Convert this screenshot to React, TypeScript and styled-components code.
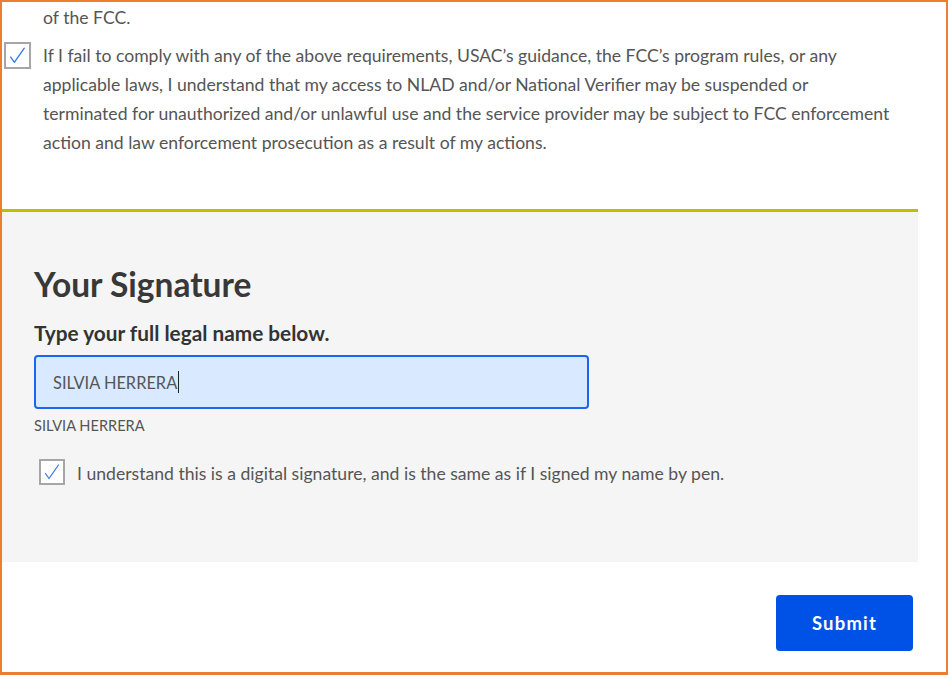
import React from "react";
import styled, { createGlobalStyle } from "styled-components";

const Global = createGlobalStyle`
  html, body { margin: 0; padding: 0; background: #fff; }
  body { font-family: "Lato", "Open Sans", sans-serif; }
  * { box-sizing: border-box; }
`;

const Frame = styled.div`
  width: 948px;
  height: 675px;
  border: 2px solid #ed7d31;
  border-bottom-width: 3px;
  overflow: hidden;
  background: #fff;
`;

const Column = styled.div`
  width: 916px;
  display: flex;
  flex-direction: column;
`;

const Agreement = styled.section`
  padding: 1px 0 52px 0;
  display: flex;
  flex-direction: column;
  gap: 9px;
`;

const Paragraph = styled.p<{ $indent?: number }>`
  margin: 0;
  padding-left: ${(p) => p.$indent ?? 0}px;
  font-size: 17.6px;
  line-height: 29px;
  color: #555;
  white-space: nowrap;
`;

const CheckRow = styled.div<{ $gap: number; $offset: number; $boxTop: number }>`
  display: flex;
  align-items: flex-start;
  gap: ${(p) => p.$gap}px;
  padding-left: ${(p) => p.$offset}px;
  & > :first-child { margin-top: ${(p) => p.$boxTop}px; }
`;

const Box = styled.span<{ $size: number }>`
  flex: none;
  width: ${(p) => p.$size}px;
  height: ${(p) => p.$size}px;
  border: 2px solid #a6a6a6;
  background: #fff;
  display: flex;
  align-items: center;
  justify-content: center;
`;

const SignatureSection = styled.section`
  background: #f5f5f5;
  border-top: 3px solid #bcc000;
  padding: 52px 0 74px 32px;
  display: flex;
  flex-direction: column;
`;

const Heading = styled.h2`
  margin: 0;
  font-size: 33.5px;
  line-height: 40px;
  font-weight: 700;
  color: #383838;
`;

const Label = styled.label`
  margin-top: 17px;
  font-size: 20.8px;
  line-height: 24px;
  font-weight: 700;
  color: #333;
`;

const NameField = styled.div`
  margin-top: 10px;
  width: 555px;
  height: 54px;
  border: 2px solid #1a66ee;
  border-radius: 4px;
  background: #d9e9ff;
  display: flex;
  align-items: center;
  padding-left: 17px;
  font-size: 16.4px;
  color: #555;
`;

const Caret = styled.span`
  display: inline-block;
  width: 1px;
  height: 22px;
  background: #222;
  margin-left: 1px;
`;

const Echo = styled.div`
  margin-top: 8px;
  font-size: 14.6px;
  line-height: 18px;
  color: #555;
`;

const SignRow = styled.div`
  margin-top: 24px;
`;

const Footer = styled.div`
  display: flex;
  justify-content: flex-end;
  padding: 33px 5px 0 0;
`;

const SubmitButton = styled.button`
  width: 137px;
  height: 56px;
  border: none;
  border-radius: 4px;
  background: #0052e6;
  color: #fff;
  font-family: "Lato", sans-serif;
  font-weight: 700;
  font-size: 18.5px;
  letter-spacing: 1.2px;
  cursor: pointer;
`;

const Check = ({ size }: { size: number }) => (
  <svg width={size - 4} height={size - 4} viewBox="0 0 22 22">
    <path d="M4.5 12.5 L8 17.5 L17.5 4" fill="none" stroke="#3b7be9" strokeWidth="1.3" strokeLinecap="round" strokeLinejoin="round" />
  </svg>
);

export default function App() {
  return (
    <Frame>
      <Global />
      <Column>
        <Agreement>
          <Paragraph $indent={41}>of the FCC.</Paragraph>
          <CheckRow $gap={12} $offset={2} $boxTop={1}>
            <Box $size={27}>
              <Check size={27} />
            </Box>
            <Paragraph>
              If I fail to comply with any of the above requirements, USAC’s guidance, the FCC’s program rules, or any
              <br />
              applicable laws, I understand that my access to NLAD and/or National Verifier may be suspended or
              <br />
              terminated for unauthorized and/or unlawful use and the service provider may be subject to FCC enforcement
              <br />
              action and law enforcement prosecution as a result of my actions.
            </Paragraph>
          </CheckRow>
        </Agreement>
        <SignatureSection>
          <Heading>Your Signature</Heading>
          <Label>Type your full legal name below.</Label>
          <NameField>
            SILVIA HERRERA
            <Caret />
          </NameField>
          <Echo>SILVIA HERRERA</Echo>
          <SignRow>
            <CheckRow $gap={12} $offset={5} $boxTop={0}>
              <Box $size={26}>
                <Check size={26} />
              </Box>
              <Paragraph>I understand this is a digital signature, and is the same as if I signed my name by pen.</Paragraph>
            </CheckRow>
          </SignRow>
        </SignatureSection>
        <Footer>
          <SubmitButton>Submit</SubmitButton>
        </Footer>
      </Column>
    </Frame>
  );
}
